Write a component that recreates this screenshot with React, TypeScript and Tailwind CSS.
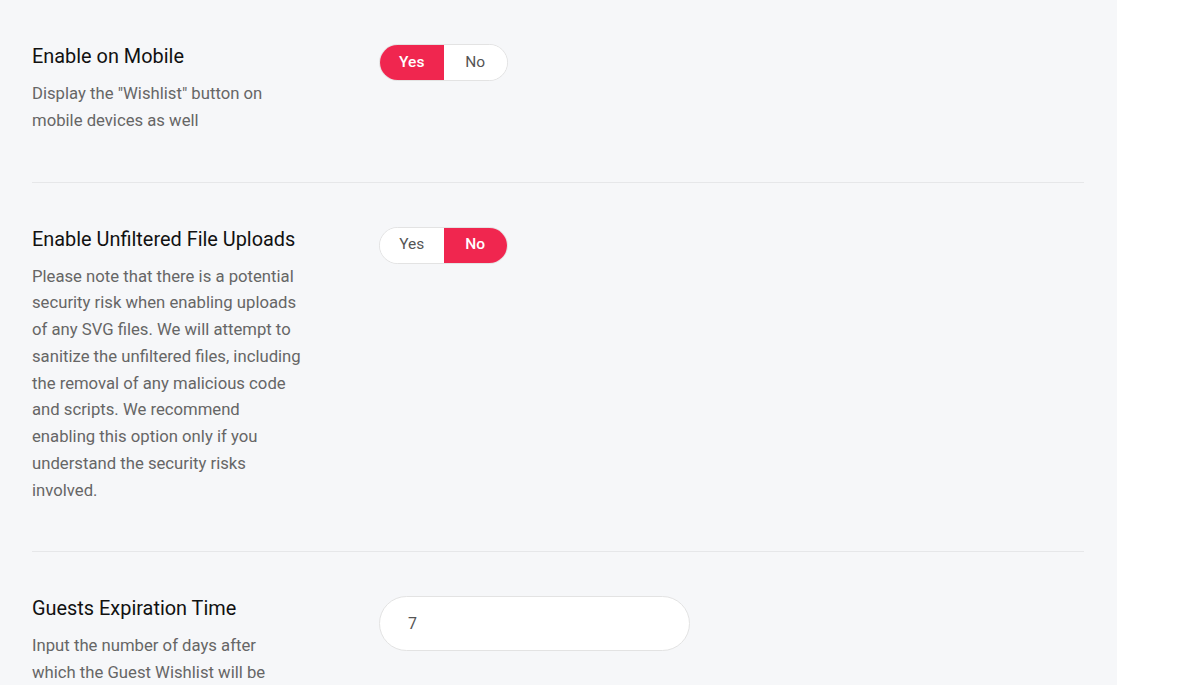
import React from "react";

function Toggle({ value }: { value: "yes" | "no" }) {
  const on = "bg-[#f0264f] text-white font-medium";
  const off = "bg-white text-[#555]";
  return (
    <div className="flex h-[37px] w-[129px] rounded-full border border-[#e3e3e3] overflow-hidden text-[15.5px]">
      <div className={`flex-1 flex items-center justify-center ${value === "yes" ? on : off}`}>Yes</div>
      <div className={`flex-1 flex items-center justify-center ${value === "no" ? on : off}`}>No</div>
    </div>
  );
}

function Row({ title, desc, control, last }: { title: string; desc: string; control: React.ReactNode; last?: boolean }) {
  return (
    <div className={`flex pt-[44px] pb-[47px] ${last ? "" : "border-b border-[#e6e7e9]"}`}>
      <div className="w-[347px] shrink-0">
        <div className="text-[19.9px] leading-[25px] text-[#111]">{title}</div>
        <div className="mt-[12px] w-[270px] text-[16.7px] leading-[26.75px] text-[#666]">{desc}</div>
      </div>
      <div>{control}</div>
    </div>
  );
}

export default function App() {
  return (
    <div className="w-[1200px] h-[685px] bg-white overflow-hidden" style={{ fontFamily: "Roboto, 'Liberation Sans', sans-serif" }}>
      <div className="w-[1117px] h-full bg-[#f6f7f9] pl-[32px] pr-[33px]">
        <Row title="Enable on Mobile" desc={'Display the "Wishlist" button on mobile devices as well'} control={<Toggle value="yes" />} />
        <Row
          title="Enable Unfiltered File Uploads"
          desc="Please note that there is a potential security risk when enabling uploads of any SVG files. We will attempt to sanitize the unfiltered files, including the removal of any malicious code and scripts. We recommend enabling this option only if you understand the security risks involved."
          control={<Toggle value="no" />}
        />
        <Row
          title="Guests Expiration Time"
          desc="Input the number of days after which the Guest Wishlist will be cleared"
          last
          control={
            <div className="w-[311px] h-[55px] rounded-full border border-[#e3e3e3] bg-white flex items-center pl-[28px] text-[16px] text-[#555]">7</div>
          }
        />
      </div>
    </div>
  );
}
